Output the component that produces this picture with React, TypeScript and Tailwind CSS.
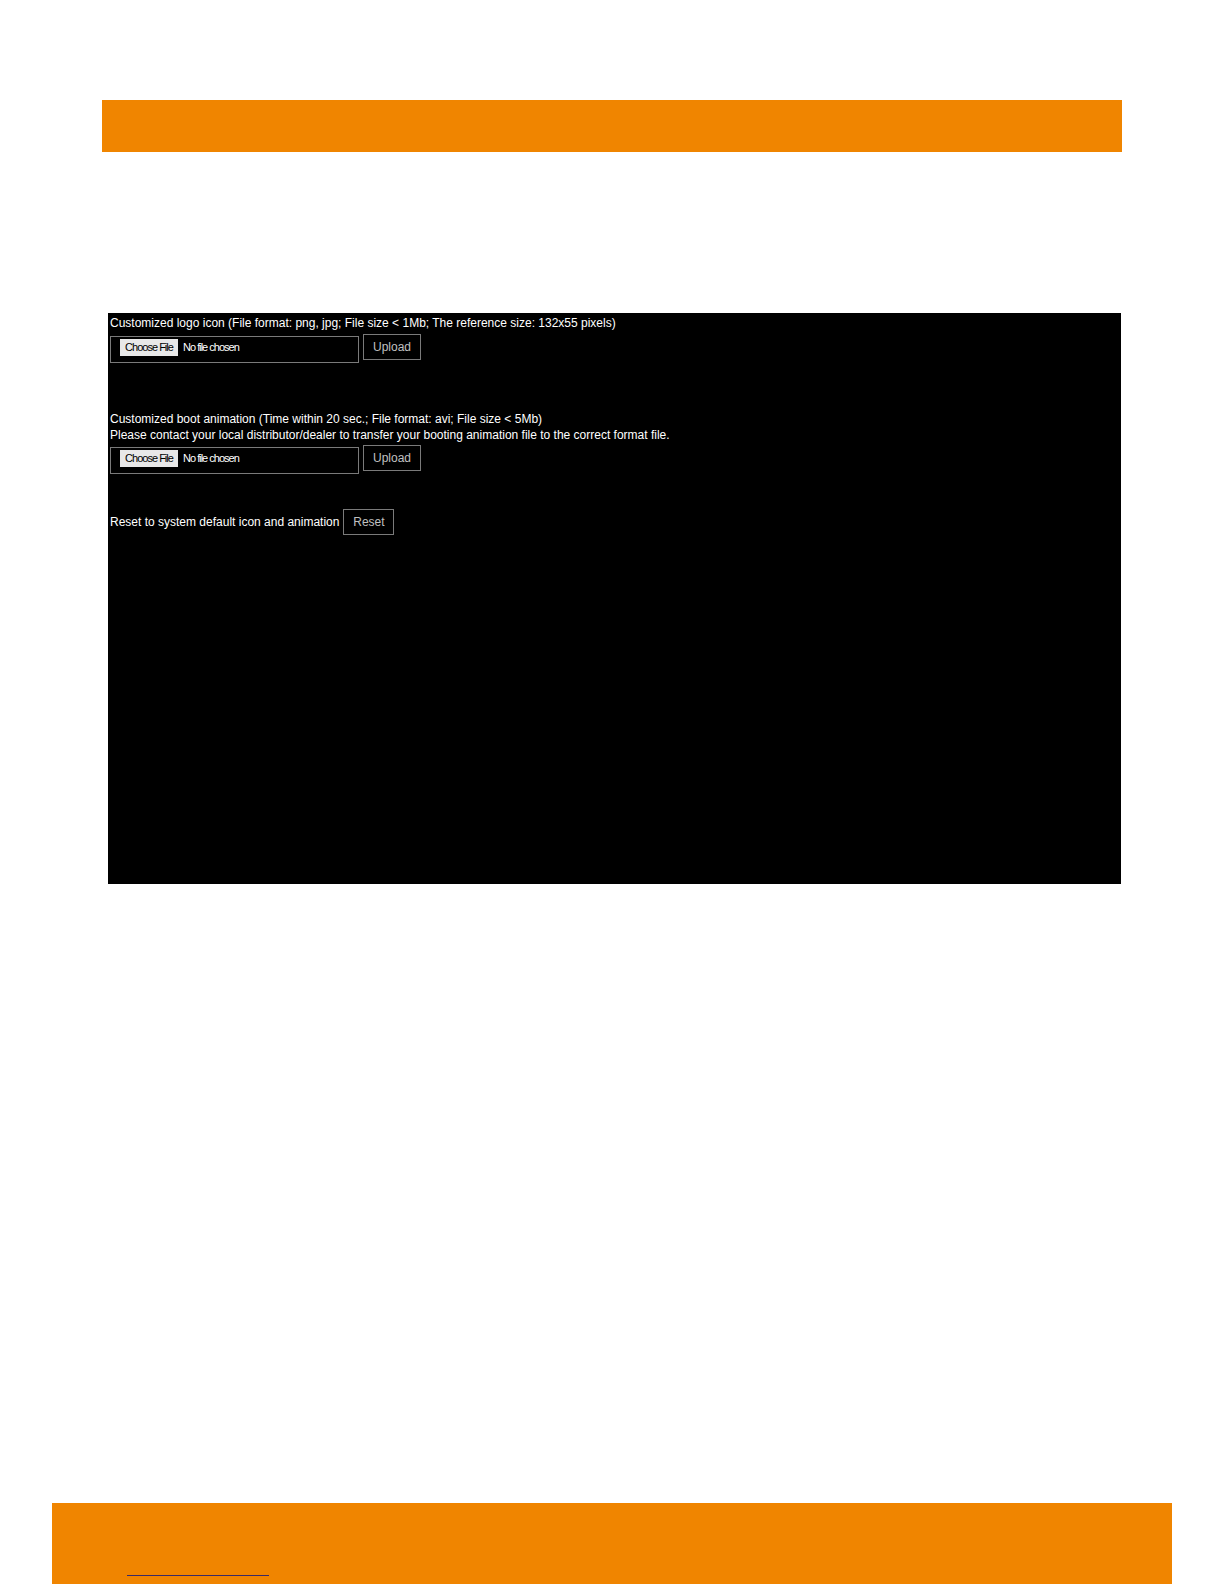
import React from 'react'

const font = { fontFamily: '"Liberation Sans", Arial, sans-serif' }

function FileRow() {
  return (
    <div className="flex items-start">
      <div className="mt-[2px] flex h-[27px] w-[249px] items-start border border-[#7a7a7a] pl-[9px] pt-[2px]">
        <span className="flex h-[17px] w-[58px] items-center justify-center bg-[#e8e8e8] text-[11px] tracking-[-0.09em] text-black">
          Choose File
        </span>
        <span className="ml-[5px] flex h-[17px] items-center text-[11px] tracking-[-0.09em] text-white">No file chosen</span>
      </div>
      <button className="ml-[4px] flex h-[26px] w-[58px] items-center justify-center border border-[#7a7a7a] text-[12px] text-[#c0c0c0]">
        Upload
      </button>
    </div>
  )
}

export default function App() {
  return (
    <div className="relative h-[1584px] w-full overflow-hidden bg-white" style={font}>
      <div className="pt-[100px]">
        <div className="ml-[102px] h-[52px] w-[1020px] bg-[#f08500]" />
      </div>

      <div className="ml-[108px] mt-[161px] h-[571px] w-[1013px] bg-black pl-[2px] pt-[3px] text-[12px] text-white">
        <div className="leading-[15px]">
          Customized logo icon (File format: png, jpg; File size &lt; 1Mb; The reference size: 132x55 pixels)
        </div>
        <div className="mt-[3px]">
          <FileRow />
        </div>

        <div className="mt-[48px] leading-[16px]">
          Customized boot animation (Time within 20 sec.; File format: avi; File size &lt; 5Mb)
        </div>
        <div className="leading-[16px]">
          Please contact your local distributor/dealer to transfer your booting animation file to the correct format file.
        </div>
        <div className="mt-[2px]">
          <FileRow />
        </div>

        <div className="mt-[35px] flex items-center">
          <span>Reset to system default icon and animation</span>
          <button className="ml-[4px] flex h-[26px] w-[51px] items-center justify-center border border-[#7a7a7a] text-[12px] text-[#c0c0c0]">
            Reset
          </button>
        </div>
      </div>

      <div className="ml-[52px] mt-[619px] h-[81px] w-[1120px] bg-[#f08500] pl-[75px] pt-[72px]">
        <div className="h-[1px] w-[142px] bg-[#3b2a66]" />
      </div>
    </div>
  )
}
